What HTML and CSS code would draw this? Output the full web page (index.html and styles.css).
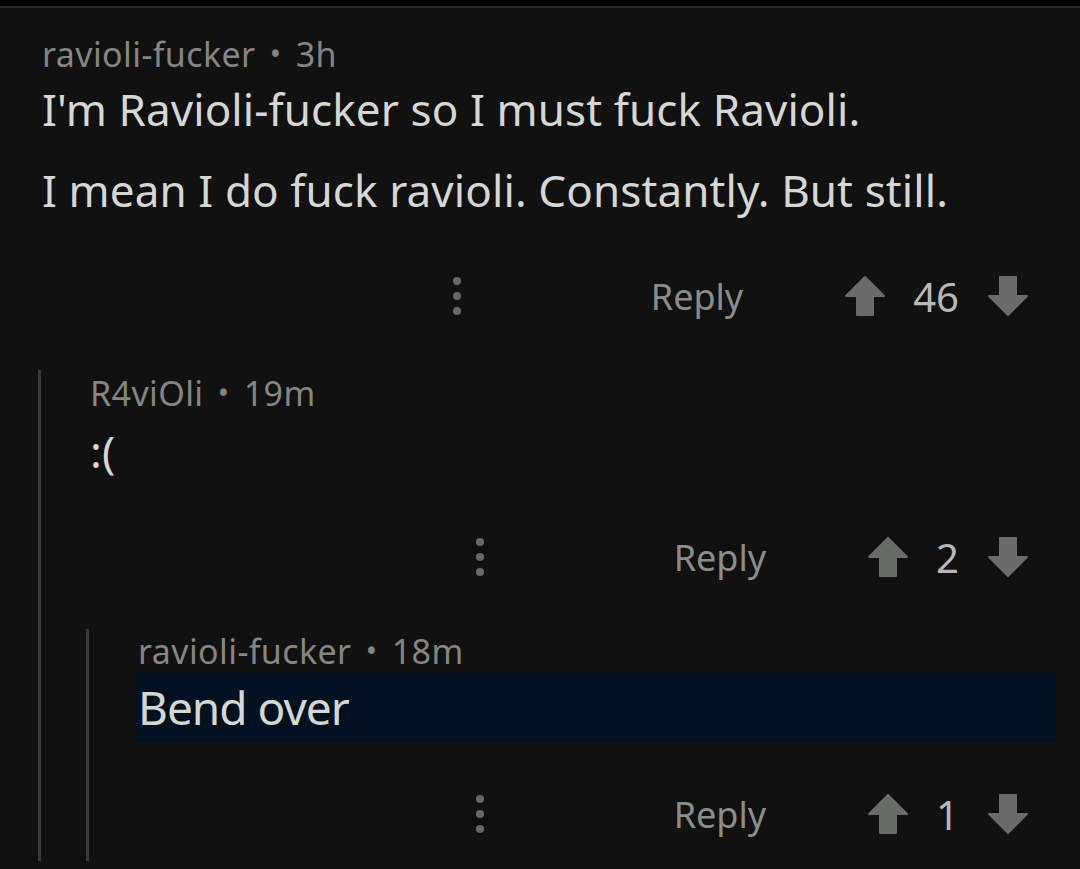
FILE: index.html
```html
<!DOCTYPE html>
<html lang="en">
<head>
    <meta charset="UTF-8">
    <meta name="viewport" content="width=device-width, initial-scale=1.0">
    <title>Comments</title>
    <link rel="stylesheet" href="styles.css">
</head>
<body>
    <div class="status-bar"></div>

    <div class="thread">
        <div class="comment top">
            <div class="meta">ravioli-fucker <span class="dot">•</span> 3h</div>
            <p class="text first">I'm Ravioli-fucker so I must fuck Ravioli.</p>
            <p class="text">I mean I do fuck ravioli. Constantly. But still.</p>
            <div class="actions">
                <span class="more"><i></i><i></i><i></i></span>
                <span class="reply">Reply</span>
                <span class="vote">
                    <svg class="arrow" viewBox="0 0 40 40"><path d="M20 1 L39 20 L28 20 L28 39 L12 39 L12 20 L1 20 Z"/></svg>
                    <span class="score">46</span>
                    <svg class="arrow" viewBox="0 0 40 40"><path d="M20 39 L39 20 L28 20 L28 1 L12 1 L12 20 L1 20 Z"/></svg>
                </span>
            </div>
        </div>

        <div class="comment child">
            <div class="meta">R4viOli <span class="dot">•</span> 19m</div>
            <p class="text first">:(</p>
            <div class="actions">
                <span class="more"><i></i><i></i><i></i></span>
                <span class="reply">Reply</span>
                <span class="vote">
                    <svg class="arrow" viewBox="0 0 40 40"><path d="M20 1 L39 20 L28 20 L28 39 L12 39 L12 20 L1 20 Z"/></svg>
                    <span class="score">2</span>
                    <svg class="arrow" viewBox="0 0 40 40"><path d="M20 39 L39 20 L28 20 L28 1 L12 1 L12 20 L1 20 Z"/></svg>
                </span>
            </div>

            <div class="comment child nested">
                <div class="meta">ravioli-fucker <span class="dot">•</span> 18m</div>
                <p class="text first highlight">Bend over</p>
                <div class="actions">
                    <span class="more"><i></i><i></i><i></i></span>
                    <span class="reply">Reply</span>
                    <span class="vote">
                        <svg class="arrow" viewBox="0 0 40 40"><path d="M20 1 L39 20 L28 20 L28 39 L12 39 L12 20 L1 20 Z"/></svg>
                        <span class="score">1</span>
                        <svg class="arrow" viewBox="0 0 40 40"><path d="M20 39 L39 20 L28 20 L28 1 L12 1 L12 20 L1 20 Z"/></svg>
                    </span>
                </div>
            </div>
        </div>
    </div>
</body>
</html>
```

FILE: styles.css
```css
body {
    margin: 0;
    background-color: #101110;
    font-family: "Noto Sans", "Open Sans", sans-serif;
    color: #d6d7d4;
}
.status-bar {
    height: 6px;
    background-color: #000;
    border-bottom: 2px solid #2b2c2a;
}
.thread {
    padding: 26px 24px 0 38px;
}
.comment.top {
    padding-left: 4px;
}
.meta {
    font-size: 34px;
    line-height: 40px;
    color: #858683;
    letter-spacing: 0.4px;
}
.meta .dot {
    font-size: 30px;
    vertical-align: 2px;
    margin: 0 5px;
}
.text {
    font-size: 44px;
    line-height: 52px;
    margin: 29px 0 0 0;
    letter-spacing: 0.1px;
}
.text.first {
    margin-top: 9px;
}
.actions {
    display: flex;
    align-items: center;
    justify-content: flex-end;
    height: 60px;
    margin-top: 50px;
    padding-right: 28px;
}
.more {
    display: flex;
    flex-direction: column;
    gap: 7px;
    margin-right: 190px;
}
.more i {
    display: block;
    width: 8px;
    height: 8px;
    border-radius: 50%;
    background-color: #666865;
}
.reply {
    font-size: 36px;
    color: #8c8d8a;
    margin-right: 102px;
}
.vote {
    display: flex;
    align-items: center;
}
.arrow {
    width: 40px;
    height: 40px;
    fill: #6a6c69;
    stroke: #6a6c69;
    stroke-width: 2;
    stroke-linejoin: round;
}
.score {
    font-size: 40px;
    color: #b8b9b6;
    margin: 0 29px 0 28px;
}
.comment.child {
    margin-top: 44px;
    border-left: 3px solid #3b3c3a;
    padding: 3px 0 0 49px;
}
.comment.child .text.first {
    margin-top: 12px;
}
.comment.child .actions {
    margin-top: 50px;
}
.comment.nested {
    margin-left: -4px;
    margin-top: 42px;
    padding-top: 2px;
    padding-bottom: 17px;
}
.comment.nested .text.first {
    margin-top: 2px;
}
.highlight {
    background-color: #01111f;
    font-size: 46px;
    line-height: 69px;
    letter-spacing: -1px;
    padding-left: 2px;
    margin-left: -2px;
}
.comment.nested .actions {
    margin-top: 42px;
}
```
